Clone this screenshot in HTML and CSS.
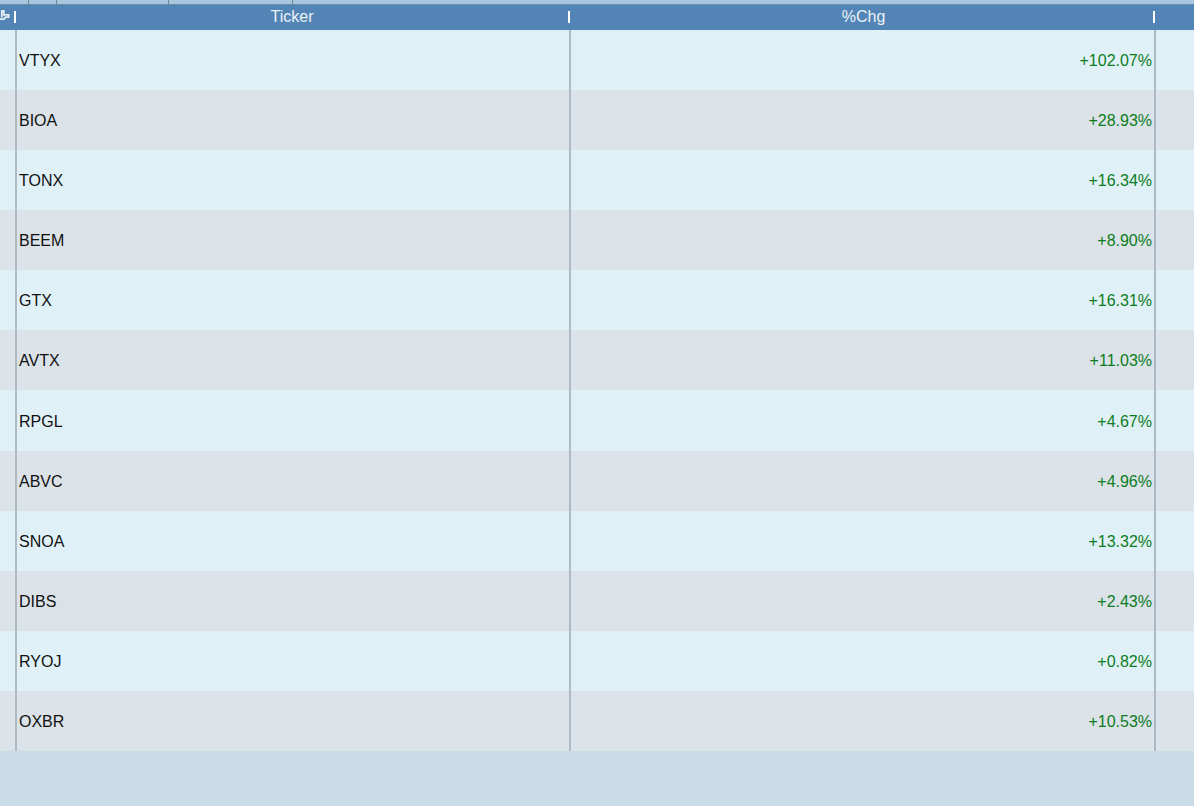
FILE: index.html
```html
<!DOCTYPE html>
<html lang="en">
<head>
<meta charset="utf-8">
<title>Ticker table</title>
<link rel="stylesheet" href="styles.css">
</head>
<body>
<div class="tabs"><span class="tab"></span><span class="tab"></span><span class="tab"></span><span class="tab"></span><span class="tab last"></span></div>
<div class="header">
  <div class="hcell first"><svg class="pin" width="10" height="11" viewBox="0 0 10 11"><path d="M0 9.200H4L5.500 7.200H8.700V4.800H3.800V0.800H1.800V7.500" fill="none" stroke="#e4ecf4" stroke-width="1.800"/></svg><i class="grip"></i></div>
  <div class="hcell ticker"><span>Ticker</span><i class="grip"></i></div>
  <div class="hcell chg"><span>%Chg</span><i class="grip"></i></div>
</div>
<div class="rows">
  <div class="row"><div class="c0"></div><div class="c1">VTYX</div><div class="c2">+102.07%</div></div>
  <div class="row alt"><div class="c0"></div><div class="c1">BIOA</div><div class="c2">+28.93%</div></div>
  <div class="row"><div class="c0"></div><div class="c1">TONX</div><div class="c2">+16.34%</div></div>
  <div class="row alt"><div class="c0"></div><div class="c1">BEEM</div><div class="c2">+8.90%</div></div>
  <div class="row"><div class="c0"></div><div class="c1">GTX</div><div class="c2">+16.31%</div></div>
  <div class="row alt"><div class="c0"></div><div class="c1">AVTX</div><div class="c2">+11.03%</div></div>
  <div class="row tall"><div class="c0"></div><div class="c1">RPGL</div><div class="c2">+4.67%</div></div>
  <div class="row alt"><div class="c0"></div><div class="c1">ABVC</div><div class="c2">+4.96%</div></div>
  <div class="row"><div class="c0"></div><div class="c1">SNOA</div><div class="c2">+13.32%</div></div>
  <div class="row alt"><div class="c0"></div><div class="c1">DIBS</div><div class="c2">+2.43%</div></div>
  <div class="row"><div class="c0"></div><div class="c1">RYOJ</div><div class="c2">+0.82%</div></div>
  <div class="row alt"><div class="c0"></div><div class="c1">OXBR</div><div class="c2">+10.53%</div></div>
</div>
</body>
</html>
```
FILE: styles.css
```css
html, body { margin: 0; padding: 0; }
body {
  width: 1194px;
  height: 806px;
  overflow: hidden;
  background: #c9dbe6;
  font-family: "Liberation Sans", Arial, sans-serif;
  font-size: 16px;
}
.tabs {
  height: 4px;
  display: grid;
  grid-template-columns: 29px 28px 112px 124px 1fr;
  background: #a7c6de;
}
.tab { border-right: 1px solid #6f8598; }
.tab.last { border-right: 0; }
.header {
  height: 26px;
  display: grid;
  grid-template-columns: 16px 554px 585px 1fr;
  background: #5285b5;
  border-top: 1px solid #6b8fae;
  box-sizing: border-box;
  color: #eaf1f7;
}
.hcell { position: relative; display: flex; align-items: center; justify-content: center; }
.hcell span { line-height: 23px; padding-bottom: 2px; }
.hcell.ticker span { margin-right: 2px; }
.hcell.chg span { margin-left: 2px; }
.grip {
  position: absolute;
  right: 0;
  top: 6px;
  width: 2px;
  height: 12px;
  background: #fff;
}
.pin { position: absolute; left: 0; top: 5px; }
.rows { display: flex; flex-direction: column; }
.row {
  height: 60px;
  display: grid;
  grid-template-columns: 17px 554px 585px 1fr;
  grid-template-rows: minmax(0, 1fr);
  background: #e0f0f7;
  line-height: 62px;
}
.row.tall { height: 61px; line-height: 64px; }
.row.alt { background: #dbe2e8; }
.c0 { border-right: 2px solid #adb9c3; }
.c1 { padding-left: 2px; color: #111; border-right: 2px solid #adb9c3; box-sizing: border-box; }
.c2 { color: #0b7d1e; text-align: right; padding-right: 2px; border-right: 2px solid #adb9c3; box-sizing: border-box; }
```
